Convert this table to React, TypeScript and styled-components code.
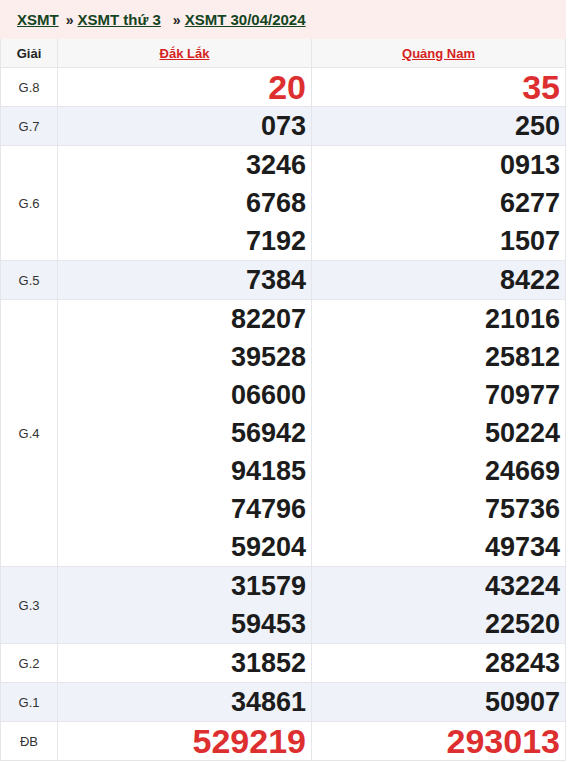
import styled, { createGlobalStyle, css } from "styled-components";

const GlobalStyle = createGlobalStyle`
  html, body {
    margin: 0;
    padding: 0;
    background: #fff;
  }
  body {
    font-family: "Liberation Sans", Arial, sans-serif;
    color: #222;
  }
`;

const Wrap = styled.div`
  width: 566px;
`;

const Crumbs = styled.div`
  height: 39px;
  background: #fdeeee;
  display: flex;
  align-items: center;
  padding-left: 17px;
  font-size: 15px;
  font-weight: bold;
  color: #222;

  a {
    color: #14451f;
    text-decoration: underline;
  }
`;

const Sep = styled.span<{ $wide?: boolean }>`
  font-size: 14px;
  margin: ${({ $wide }) => ($wide ? "0 4px 0 12px" : "0 4px 0 7px")};
`;

const Table = styled.table`
  width: 566px;
  border-collapse: collapse;
  table-layout: fixed;
`;

const Th = styled.th<{ $w?: number }>`
  height: 28px;
  padding: 0;
  background: #f7f7f7;
  border: 1px solid #e4e6ea;
  border-top: none;
  font-size: 13px;
  font-weight: bold;
  text-align: center;
  ${({ $w }) => $w && css`width: ${$w}px;`}

  a {
    color: #d61f1f;
    text-decoration: underline;
  }
`;

const Row = styled.tr<{ $alt: boolean }>`
  background: ${({ $alt }) => ($alt ? "#eff2f8" : "#fff")};
`;

const Label = styled.td`
  border: 1px solid #e4e6ea;
  text-align: center;
  font-size: 13px;
  color: #333;
  padding: 0;
`;

const Cell = styled.td`
  border: 1px solid #e4e6ea;
  text-align: right;
  padding: 0 5px 0 0;
`;

const Num = styled.div<{ $big?: boolean }>`
  height: 38px;
  line-height: 38px;
  font-weight: bold;
  font-size: ${({ $big }) => ($big ? "34px" : "27px")};
  color: ${({ $big }) => ($big ? "#dd2f2f" : "#1c1c1c")};
`;

type Prize = { label: string; a: string[]; b: string[]; big?: boolean };

const prizes: Prize[] = [
  { label: "G.8", a: ["20"], b: ["35"], big: true },
  { label: "G.7", a: ["073"], b: ["250"] },
  { label: "G.6", a: ["3246", "6768", "7192"], b: ["0913", "6277", "1507"] },
  { label: "G.5", a: ["7384"], b: ["8422"] },
  {
    label: "G.4",
    a: ["82207", "39528", "06600", "56942", "94185", "74796", "59204"],
    b: ["21016", "25812", "70977", "50224", "24669", "75736", "49734"],
  },
  { label: "G.3", a: ["31579", "59453"], b: ["43224", "22520"] },
  { label: "G.2", a: ["31852"], b: ["28243"] },
  { label: "G.1", a: ["34861"], b: ["50907"] },
  { label: "ĐB", a: ["529219"], b: ["293013"], big: true },
];

export default function App() {
  return (
    <>
      <GlobalStyle />
      <Wrap>
        <Crumbs>
          <a>XSMT</a>
          <Sep>»</Sep>
          <a>XSMT thứ 3</a>
          <Sep $wide>»</Sep>
          <a>XSMT 30/04/2024</a>
        </Crumbs>
        <Table>
          <thead>
            <tr>
              <Th $w={56}>Giải</Th>
              <Th>
                <a>Đắk Lắk</a>
              </Th>
              <Th>
                <a>Quảng Nam</a>
              </Th>
            </tr>
          </thead>
          <tbody>
            {prizes.map((p, i) => (
              <Row key={p.label} $alt={i % 2 === 1}>
                <Label>{p.label}</Label>
                <Cell>
                  {p.a.map((n) => (
                    <Num key={n} $big={p.big}>
                      {n}
                    </Num>
                  ))}
                </Cell>
                <Cell>
                  {p.b.map((n) => (
                    <Num key={n} $big={p.big}>
                      {n}
                    </Num>
                  ))}
                </Cell>
              </Row>
            ))}
          </tbody>
        </Table>
      </Wrap>
    </>
  );
}
